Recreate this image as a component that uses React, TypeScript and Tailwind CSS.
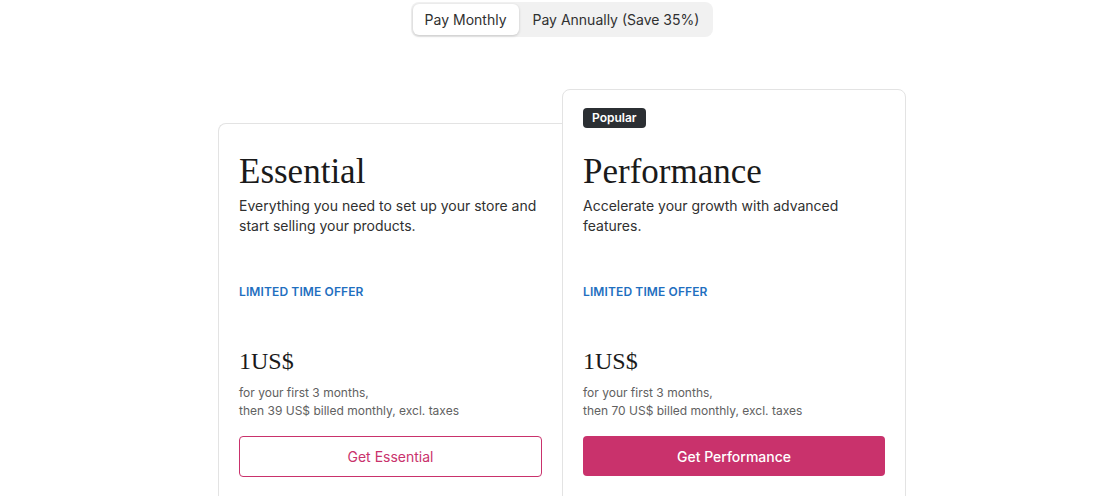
import { useState } from 'react';

type Plan = {
  name: string;
  description: string;
  after: string;
  popular?: boolean;
};

const plans: Plan[] = [
  {
    name: 'Essential',
    description: 'Everything you need to set up your store and start selling your products.',
    after: 'then 39 US$ billed monthly, excl. taxes',
  },
  {
    name: 'Performance',
    description: 'Accelerate your growth with advanced features.',
    after: 'then 70 US$ billed monthly, excl. taxes',
    popular: true,
  },
];

function PlanCard({ plan }: { plan: Plan }) {
  return (
    <div
      className={
        'w-[344px] border border-[#e3e3e3] bg-white px-5 pb-10 ' +
        (plan.popular ? 'rounded-t-lg pt-[18px]' : 'rounded-tl-lg border-r-0 pt-6 mt-[34px]')
      }
    >
      {plan.popular && (
        <div className="mb-[23px] flex">
          <span className="h-5 rounded-[4px] bg-[#2b2f33] px-[9px] text-[12px] font-semibold leading-5 text-white">
            Popular
          </span>
        </div>
      )}
      <h2
        className={
          "font-['Liberation_Serif',serif] text-[35px] leading-[42px] text-[#1a1a1a] " +
          (plan.popular ? '' : 'mt-[3px]')
        }
      >
        {plan.name}
      </h2>
      <p className="mt-[3px] h-10 text-[14px] leading-5 text-[#303030]">{plan.description}</p>
      <p className="mt-[48px] text-[12px] font-semibold leading-4 tracking-[0.01em] text-[#1f6fbf]">
        LIMITED TIME OFFER
      </p>
      <p className="mt-[45px] font-['Liberation_Serif',serif] text-[24px] leading-8 text-[#1a1a1a]">
        1US$
      </p>
      <div className="mt-[7px] text-[12px] leading-[18px] text-[#616161]">
        <p>for your first 3 months,</p>
        <p>{plan.after}</p>
      </div>
      {plan.popular ? (
        <button className="mt-[16px] h-10 w-full rounded-[4px] bg-[#c9326c] text-[14px] font-medium text-white">
          Get {plan.name}
        </button>
      ) : (
        <button className="mt-[16px] h-[41px] w-[303px] rounded-[4px] border border-[#c9326c] bg-white text-[14px] text-[#c9326c]">
          Get {plan.name}
        </button>
      )}
    </div>
  );
}

export default function App() {
  const [annual, setAnnual] = useState(false);

  return (
    <div className="min-h-screen bg-white pt-[2px] pl-[6px] font-['Inter','Liberation_Sans',sans-serif]">
      <div className="flex justify-center">
        <div className="flex rounded-lg bg-[#f1f1f1] p-[2px]">
          <button
            onClick={() => setAnnual(false)}
            className={
              'h-[31px] rounded-md px-3 text-[14px] text-[#303030] ' +
              (!annual ? 'bg-white shadow-[0_1px_3px_rgba(0,0,0,0.18)]' : '')
            }
          >
            Pay Monthly
          </button>
          <button
            onClick={() => setAnnual(true)}
            className={
              'ml-[2px] h-[31px] rounded-md px-3 text-[14px] text-[#303030] ' +
              (annual ? 'bg-white shadow-[0_1px_3px_rgba(0,0,0,0.18)]' : '')
            }
          >
            Pay Annually (Save 35%)
          </button>
        </div>
      </div>
      <div className="mt-[52px] flex items-start justify-center">
        {plans.map((p) => (
          <PlanCard key={p.name} plan={p} />
        ))}
      </div>
    </div>
  );
}
